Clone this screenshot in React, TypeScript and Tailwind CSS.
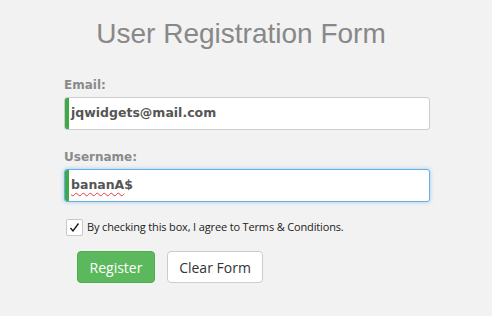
import React from "react";

const Field = ({
  label,
  focused,
  children,
}: {
  label: string;
  focused?: boolean;
  children: React.ReactNode;
}) => (
  <div className="flex flex-col">
    <label className="text-[12px] font-bold text-[#8a8a8a] leading-[15px] mb-[4px]">
      {label}
    </label>
    <div
      className={
        focused
          ? "relative h-[33px] bg-white rounded-[3px] border border-[#66afe9] shadow-[0_0_4px_rgba(102,175,233,0.6)] flex items-center pl-[6px]"
          : "relative h-[33px] bg-white rounded-[3px] border border-[#cccccc] flex items-center pl-[6px]"
      }
    >
      <div className="absolute left-0 top-0 bottom-0 w-[4px] bg-[#3fa94a] rounded-l-[2px]" />
      <span className="text-[12.5px] font-bold text-[#555555]">{children}</span>
    </div>
  </div>
);

export default function App() {
  return (
    <div
      className="w-full h-[316px] bg-[#f2f2f2] overflow-hidden"
      style={{ fontFamily: '"DejaVu Sans", Verdana, sans-serif' }}
    >
      <h1 className="text-center text-[28px] text-[#888888] leading-[32px] pt-[18px] pr-[10px] font-['Liberation_Sans',Arial,sans-serif]">
        User Registration Form
      </h1>

      <div className="ml-[64px] w-[366px] mt-[28px] flex flex-col gap-[20px]">
        <Field label="Email:">jqwidgets@mail.com</Field>
        <Field label="Username:" focused>
          <span className="underline decoration-wavy decoration-[#e04040] decoration-1 underline-offset-[3px]">
            bananA
          </span>
          $
        </Field>
      </div>

      <div className="ml-[66px] mt-[17px] flex items-center gap-[4px] font-['Open_Sans',sans-serif]">
        <div className="w-[17px] h-[17px] bg-white border border-[#c8c8c8] rounded-[2px] flex items-center justify-center">
          <svg width="11" height="11" viewBox="0 0 11 11">
            <path d="M1.5 6 L4 9 L9.5 1.5" fill="none" stroke="#111" strokeWidth="1.3" />
          </svg>
        </div>
        <span className="text-[11px] text-[#222] tracking-[-0.15px]">
          By checking this box, I agree to Terms &amp; Conditions.
        </span>
      </div>

      <div className="ml-[77px] mt-[15px] flex gap-[12px] font-['Open_Sans',sans-serif]">
        <button className="w-[78px] h-[32px] rounded-[4px] bg-[#5cb85c] border border-[#4cae4c] text-white text-[14px]">
          Register
        </button>
        <button className="w-[96px] h-[32px] rounded-[4px] bg-white border border-[#cccccc] text-[#333] text-[14px]">
          Clear Form
        </button>
      </div>
    </div>
  );
}
